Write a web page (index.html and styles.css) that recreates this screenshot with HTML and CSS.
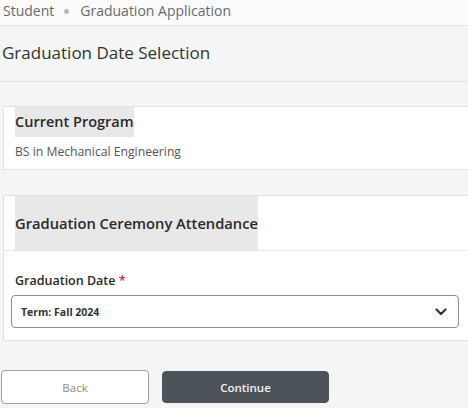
FILE: index.html
```html
<!DOCTYPE html>
<html lang="en">
<head>
<meta charset="utf-8">
<title>Graduation Application</title>
<link rel="stylesheet" href="styles.css">
</head>
<body>
<nav class="crumbs">
  <span class="crumb">Student</span>
  <span class="sep"></span>
  <span class="crumb">Graduation Application</span>
</nav>
<header class="page-head">
  <h1>Graduation Date Selection</h1>
</header>
<main class="content">
  <section class="card">
    <h2 class="card-title"><span class="hl hl-sm">Current Program</span></h2>
    <p class="card-text">BS in Mechanical Engineering</p>
  </section>
  <section class="card card-form">
    <div class="card-head">
      <h2 class="card-title"><span class="hl hl-lg">Graduation Ceremony Attendance</span></h2>
    </div>
    <div class="card-body">
      <label class="field-label" for="gd">Graduation Date <span class="req">*</span></label>
      <div class="select">
        <span class="select-value">Term: Fall 2024</span>
        <svg class="chev" width="12" height="8" viewBox="0 0 12 8"><path d="M1.5 1.5 L6 6 L10.5 1.5" fill="none" stroke="#333" stroke-width="2.2" stroke-linecap="round" stroke-linejoin="round"/></svg>
      </div>
    </div>
  </section>
  <div class="actions">
    <button class="btn btn-back">Back</button>
    <button class="btn btn-primary">Continue</button>
  </div>
</main>
</body>
</html>
```
FILE: styles.css
```css
* { box-sizing: border-box; }
html, body { margin: 0; padding: 0; }
body {
  width: 468px;
  height: 408px;
  overflow: hidden;
  background: #f4f5f5;
  font-family: "Open Sans", "Noto Sans", sans-serif;
  color: #333;
}
.crumbs {
  height: 26px;
  background: #fbfbfb;
  border-bottom: 1px solid #e3e4e4;
  display: flex;
  align-items: center;
  padding: 0 0 4px 3px;
  font-size: 14px;
  color: #6a6a6a;
}
.sep {
  width: 5px;
  height: 5px;
  border-radius: 50%;
  background: #b8b8b8;
  margin: 2px 11px 0 10px;
}
.page-head {
  height: 56px;
  border-bottom: 1px solid #e3e4e4;
  display: flex;
  align-items: center;
  padding: 0 0 3px 2px;
}
.page-head h1 {
  margin: 0;
  font-size: 17px;
  font-weight: 400;
  color: #333;
}
.content {
  padding: 24px 0 0 3px;
}
.card {
  background: #fff;
  border: 1px solid #e2e3e3;
  margin-right: -6px;
  padding: 0 0 7px 11px;
}
.card-title {
  margin: 0;
  font-size: 14.5px;
  font-weight: 600;
  color: #2a2a2a;
}
.hl {
  display: inline-block;
  background: #e8e8e8;
}
.hl-sm {
  line-height: 30px;
}
.hl-lg {
  line-height: 54px;
  font-size: 14.7px;
}
.card-text {
  margin: 5px 0 0 0;
  font-size: 12.2px;
  line-height: 20px;
  color: #555;
}
.card-form {
  margin-top: 25px;
  padding: 0;
}
.card-head {
  padding-left: 11px;
  border-bottom: 1px solid #e6e7e7;
}
.card-body {
  padding: 20px 14px 12px 7px;
}
.field-label {
  display: block;
  font-size: 12.5px;
  font-weight: 600;
  color: #2a2a2a;
  line-height: 20px;
  padding-left: 4px;
  margin-bottom: 4px;
}
.req { color: #c8303a; }
.select {
  height: 33px;
  border: 1px solid #8f8f8f;
  border-radius: 4px;
  display: flex;
  align-items: center;
  justify-content: space-between;
  padding: 0 11px 0 9px;
  background: #fff;
}
.select-value {
  font-size: 10.5px;
  font-weight: 700;
  color: #333;
}
.chev { display: block; }
.actions {
  display: flex;
  align-items: center;
  gap: 13px;
  margin: 29px 0 0 -2px;
}
.btn {
  font-family: "Open Sans", "Noto Sans", sans-serif;
  font-size: 11.5px;
  border-radius: 4px;
  cursor: pointer;
}
.btn-back {
  width: 148px;
  height: 34px;
  background: #fff;
  border: 1px solid #a0a0a0;
  color: #8a8a8a;
}
.btn-primary {
  width: 167px;
  height: 32px;
  background: #4d5459;
  border: 1px solid #4d5459;
  color: #f0f0f0;
  font-weight: 600;
}
```
